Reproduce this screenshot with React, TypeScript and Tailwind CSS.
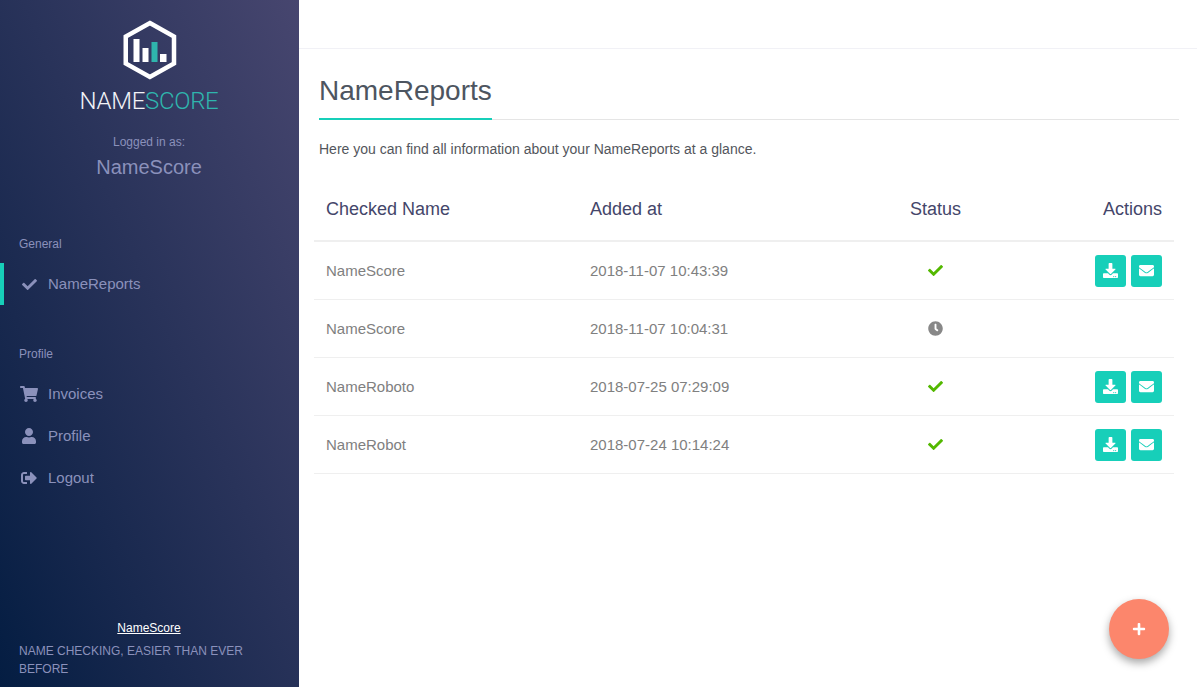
import { FaCheck, FaShoppingCart, FaUser, FaSignOutAlt, FaDownload, FaEnvelope, FaClock, FaPlus } from "react-icons/fa";

const rows = [
  { name: "NameScore", at: "2018-11-07 10:43:39", done: true },
  { name: "NameScore", at: "2018-11-07 10:04:31", done: false },
  { name: "NameRoboto", at: "2018-07-25 07:29:09", done: true },
  { name: "NameRobot", at: "2018-07-24 10:14:24", done: true },
];

function NavItem({ icon, label, active }: { icon: React.ReactNode; label: string; active?: boolean }) {
  return (
    <div className={`h-[42px] flex items-center text-[15px] text-[#8b91bb] ${active ? "border-l-4 border-[#17cfb9] pl-[17px]" : "pl-[21px]"}`}>
      <span className="w-[16px] mr-[11px] flex items-center justify-center">{icon}</span>
      <span>{label}</span>
    </div>
  );
}

function ActionButton({ children }: { children: React.ReactNode }) {
  return <span className="w-[31px] h-[32px] rounded-[3px] bg-[#17cfb9] text-white flex items-center justify-center">{children}</span>;
}

export default function App() {
  return (
    <div className="relative h-[687px] w-full overflow-hidden flex bg-white font-['Liberation_Sans',sans-serif]">
      <aside className="w-[299px] shrink-0 h-full flex flex-col bg-gradient-to-tr from-[#041d42] to-[#47466f]">
        <div className="flex flex-col items-center pt-[20px] pr-[1px]">
          <svg width="54" height="60" viewBox="0 0 54 60" className="block ml-[1px]">
            <path d="M26.9 3 L51 16.5 L51 43.5 L26.9 57 L2.75 43.5 L2.75 16.5 Z" fill="none" stroke="#fff" strokeWidth="4.5" />
            <rect x="10.5" y="19" width="6" height="23" fill="#fff" />
            <rect x="19.5" y="28" width="6" height="14" fill="#fff" />
            <rect x="28.5" y="22" width="6" height="20" fill="#2fb5ad" />
            <rect x="37" y="34" width="6.5" height="8" fill="#fff" />
          </svg>
          <div className="mt-[6px] h-[30px] leading-[30px] text-[24px] font-light font-['Roboto',sans-serif] tracking-[-0.3px]">
            <span className="text-[#f2f3f7]">NAME</span>
            <span className="text-[#2fb5ad]">SCORE</span>
          </div>
          <div className="mt-[18px] text-[12px] leading-[16px] text-[#8b91bb]">Logged in as:</div>
          <div className="mt-[5px] text-[20px] leading-[24px] text-[#8b91bb]">NameScore</div>
        </div>
        <div className="mt-[57px] pl-[19px] text-[12px] leading-[16px] text-[#8b91bb]">General</div>
        <div className="mt-[11px]">
          <NavItem icon={<FaCheck size={15} />} label="NameReports" active />
        </div>
        <div className="mt-[41px] pl-[19px] text-[12px] leading-[16px] text-[#8b91bb]">Profile</div>
        <div className="mt-[11px]">
          <NavItem icon={<FaShoppingCart size={18} className="shrink-0" />} label="Invoices" />
          <NavItem icon={<FaUser size={16} />} label="Profile" />
          <NavItem icon={<FaSignOutAlt size={16} className="shrink-0" />} label="Logout" />
        </div>
        <div className="mt-auto px-[19px] pb-[9px]">
          <div className="text-center text-[12px] leading-[18px] text-white underline pr-[1px]">NameScore</div>
          <div className="mt-[5px] text-[12px] leading-[18px] text-[#8b91bb]">NAME CHECKING, EASIER THAN EVER BEFORE</div>
        </div>
      </aside>
      <main className="flex-1 min-w-0">
        <div className="h-[49px] border-b border-[#f1f1f6]" />
        <div className="pl-[20px] pr-[18px] pt-[22px]">
          <div className="border-b border-[#e5e5e5] h-[49px]">
            <h1 className="inline-block h-[49px] border-b-2 border-[#17cfb9] text-[28px] leading-[40px] text-[#4d5560] font-normal">NameReports</h1>
          </div>
          <p className="mt-[19px] text-[14px] leading-[20px] text-[#53565c]">Here you can find all information about your NameReports at a glance.</p>
        </div>
        <table className="ml-[15px] mt-[21px] w-[860px] border-collapse table-fixed">
          <thead>
            <tr className="h-[61px] border-b-2 border-[#efefef] text-[18px] text-[#44466a]">
              <th className="w-[264px] pl-[12px] pb-[2px] font-normal text-left">Checked Name</th>
              <th className="w-[260px] pl-[12px] pb-[2px] font-normal text-left">Added at</th>
              <th className="w-[195px] pb-[2px] font-normal text-center">Status</th>
              <th className="pr-[12px] pb-[2px] font-normal text-right">Actions</th>
            </tr>
          </thead>
          <tbody>
            {rows.map((r, i) => (
              <tr key={i} className="h-[58px] border-b border-[#efefef] text-[15px] text-[#808080]">
                <td className="pl-[12px] pt-[2px]">{r.name}</td>
                <td className="pl-[12px] pt-[2px]">{r.at}</td>
                <td>
                  <div className="flex justify-center">
                    {r.done ? <FaCheck size={15} className="text-[#53b800]" /> : <FaClock size={15} className="text-[#888888]" />}
                  </div>
                </td>
                <td className="pr-[12px]">
                  {r.done && (
                    <div className="flex justify-end gap-[5px] pt-[1px]">
                      <ActionButton><FaDownload size={15} /></ActionButton>
                      <ActionButton><FaEnvelope size={15} /></ActionButton>
                    </div>
                  )}
                </td>
              </tr>
            ))}
          </tbody>
        </table>
      </main>
      <button className="absolute left-[1109px] top-[599px] w-[60px] h-[60px] rounded-full bg-[#fc866c] text-white flex items-center justify-center shadow-[0_4px_8px_rgba(0,0,0,0.35)]">
        <FaPlus size={14} />
      </button>
    </div>
  );
}
